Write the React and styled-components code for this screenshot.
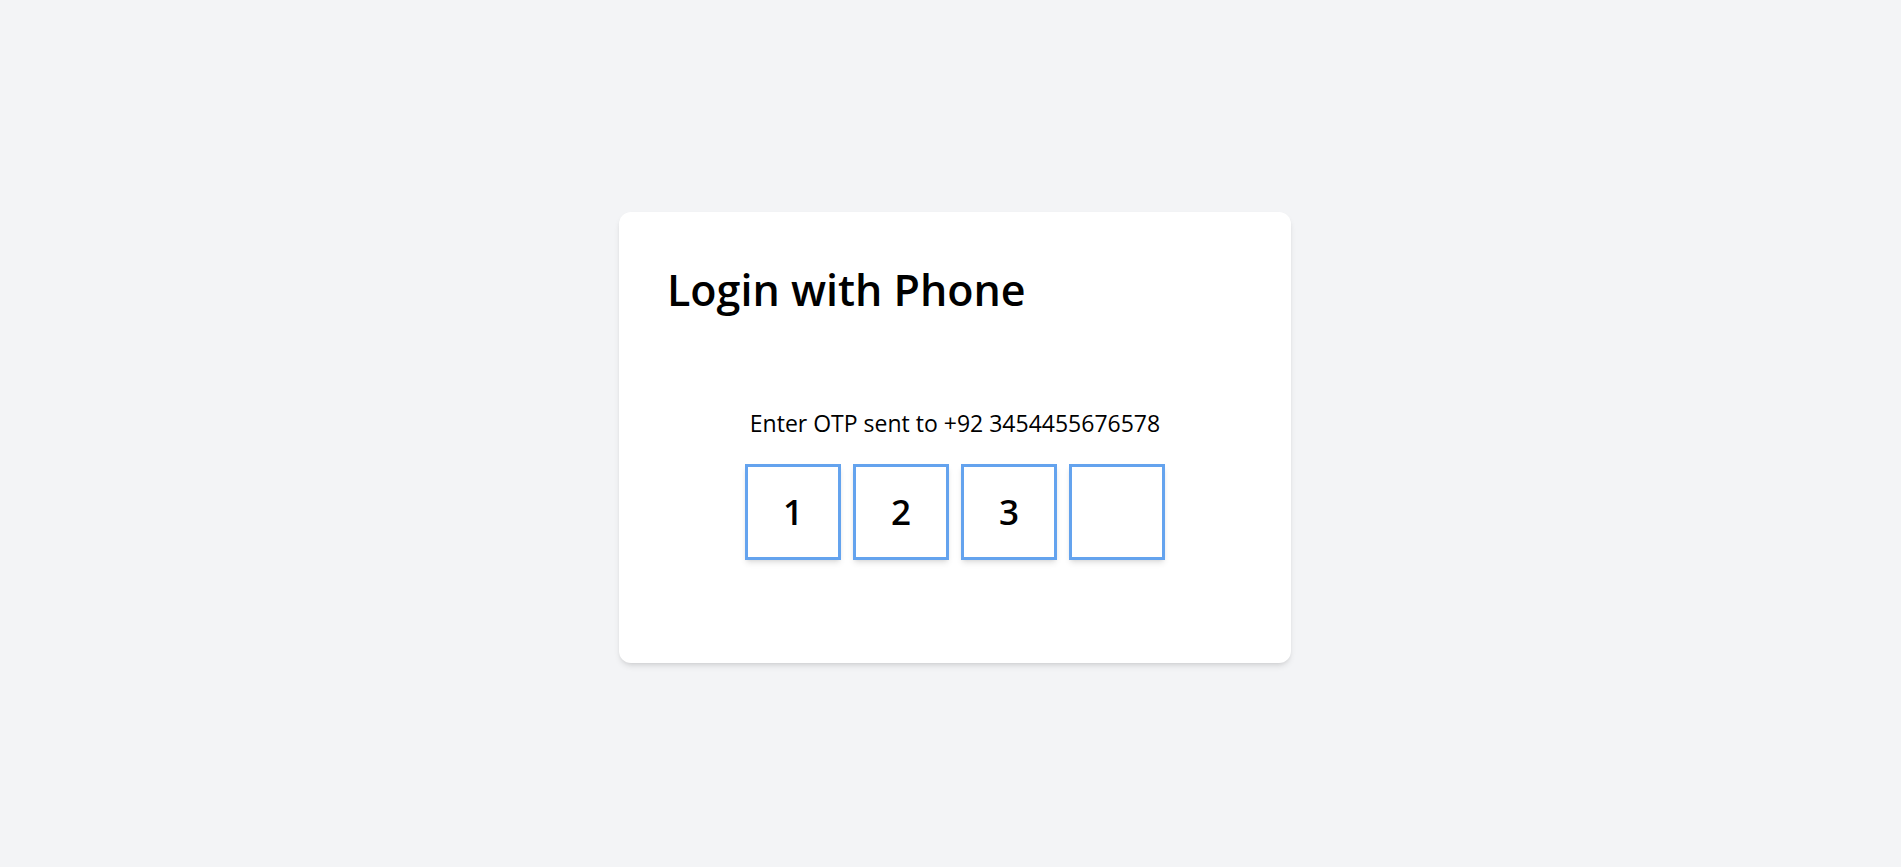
import React, { useState } from "react";
import styled, { createGlobalStyle } from "styled-components";

const GlobalStyle = createGlobalStyle`
  * {
    box-sizing: border-box;
  }
  body {
    margin: 0;
    background-color: #f3f4f6;
    font-family: "Open Sans", "Noto Sans", sans-serif;
    color: #000;
  }
`;

const App = () => {
  const [otp, setOtp] = useState(["1", "2", "3", ""]);
  const phone = "+92 3454455676578";

  const changeDigit = (index, value) => {
    const next = [...otp];
    next[index] = value.slice(-1);
    setOtp(next);
  };

  return (
    <Container>
      <GlobalStyle />
      <Card>
        <Title>Login with Phone</Title>
        <Body>
          <Label>Enter OTP sent to {phone}</Label>
          <OtpRow>
            {otp.map((digit, i) => (
              <OtpInput
                key={i}
                value={digit}
                maxLength={1}
                inputMode="numeric"
                onChange={(e) => changeDigit(i, e.target.value)}
              />
            ))}
          </OtpRow>
        </Body>
      </Card>
    </Container>
  );
};

export default App;

const Container = styled.div`
  min-height: 100vh;
  display: flex;
  align-items: center;
  justify-content: center;
  padding: 7px 0 0 9px;
`;

const Card = styled.div`
  width: 672px;
  padding: 48px 48px 103px;
  background-color: white;
  border-radius: 12px;
  box-shadow: 0 4px 6px -1px rgba(0, 0, 0, 0.1),
    0 2px 4px -2px rgba(0, 0, 0, 0.1);
`;

const Title = styled.h1`
  margin: 0;
  font-size: 43px;
  font-weight: 600;
  line-height: normal;
`;

const Body = styled.div`
  display: flex;
  flex-direction: column;
  align-items: center;
  margin-top: 88px;
`;

const Label = styled.p`
  margin: 0 0 25px;
  font-size: 23px;
  line-height: normal;
`;

const OtpRow = styled.div`
  display: flex;
  gap: 12px;
`;

const OtpInput = styled.input`
  width: 96px;
  height: 96px;
  border: 3px solid #64a3ee;
  border-radius: 0;
  outline: none;
  background: white;
  text-align: center;
  font-family: inherit;
  font-size: 35px;
  font-weight: 600;
  color: #000;
  box-shadow: 0 4px 6px -1px rgba(0, 0, 0, 0.1),
    0 2px 4px -2px rgba(0, 0, 0, 0.1);
`;
